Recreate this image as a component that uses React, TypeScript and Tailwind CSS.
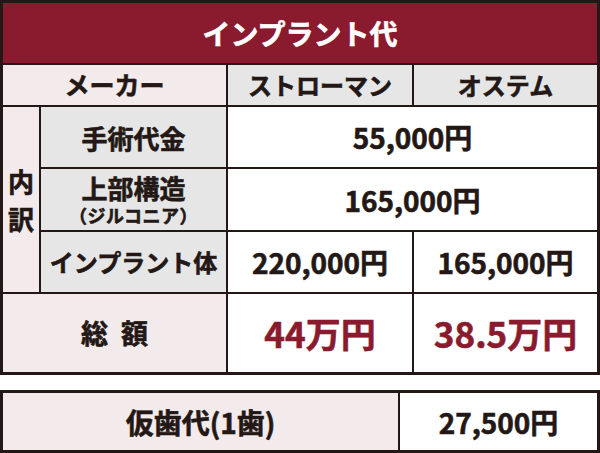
const jp = { fontFamily: '"Noto Sans CJK JP", "Noto Sans", sans-serif' };

function Cell({ className = '', children }: { className?: string; children?: React.ReactNode }) {
  return <div className={`flex items-center justify-center ${className}`}>{children}</div>;
}

export default function App() {
  return (
    <div
      className="h-[453px] w-[600px] bg-white font-bold text-[#231815] [-webkit-text-stroke:0.6px_currentColor]"
      style={jp}
    >
      <div className="grid grid-cols-[36px_185px_184px_1fr] grid-rows-[60px_40px_60px_61px_60px_78px] gap-[2px] border-[3px] border-[#231815] bg-[#231815]">
        <Cell className="col-span-4 bg-[#8a1b2e] text-[28px] text-white">インプラント代</Cell>

        <Cell className="col-span-2 bg-[#f3eaeb] text-[25px]">メーカー</Cell>
        <Cell className="bg-[#e6e6e7] text-[24px]">ストローマン</Cell>
        <Cell className="bg-[#e6e6e7] text-[24px]">オステム</Cell>

        <Cell className="row-span-3 flex-col bg-[#f3eaeb] text-[26px] leading-[38px]">
          <span>内</span>
          <span>訳</span>
        </Cell>
        <Cell className="bg-[#e6e6e7] text-[26px]">手術代金</Cell>
        <Cell className="col-span-2 bg-white text-[28px]">55,000円</Cell>

        <Cell className="flex-col gap-[4px] bg-[#e6e6e7]">
          <span className="text-[26px] leading-[26px]">上部構造</span>
          <span className="text-[18px] leading-[20px] tracking-[0.5px]">（ジルコニア）</span>
        </Cell>
        <Cell className="col-span-2 bg-white text-[28px]">165,000円</Cell>

        <Cell className="bg-[#e6e6e7] text-[24px]">インプラント体</Cell>
        <Cell className="bg-white text-[28px]">220,000円</Cell>
        <Cell className="bg-white text-[28px]">165,000円</Cell>

        <Cell className="col-span-2 gap-[13px] bg-[#f3eaeb] text-[27px]">
          <span>総</span>
          <span>額</span>
        </Cell>
        <Cell className="bg-white text-[35px] text-[#8a1b2e]">44万円</Cell>
        <Cell className="bg-white text-[35px] text-[#8a1b2e]">38.5万円</Cell>
      </div>

      <div className="mt-[15px] grid h-[63px] grid-cols-[395px_1fr] gap-[2px] border-[3px] border-[#231815] bg-[#231815]">
        <Cell className="bg-[#f3eaeb] text-[28px]">仮歯代(1歯)</Cell>
        <Cell className="bg-white text-[28px]">27,500円</Cell>
      </div>
    </div>
  );
}
